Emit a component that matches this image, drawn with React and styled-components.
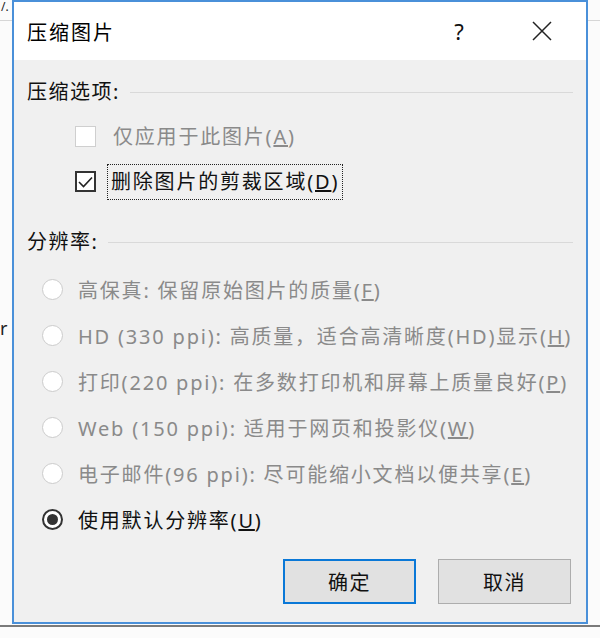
import React from 'react';
import styled, { createGlobalStyle } from 'styled-components';

const GlobalStyle = createGlobalStyle`
	html, body {
		margin: 0;
		padding: 0;
		background: #fafafa;
	}
	* {
		box-sizing: border-box;
	}
`;

const FONT = `"Noto Sans", "Noto Sans CJK SC", sans-serif`;

const Desktop = styled.div`
	position: relative;
	width: 600px;
	height: 638px;
	overflow: hidden;
	background: #fbfbfb;
	font-family: ${FONT};
	padding-left: 12px;
`;

// bits of the window behind the dialog
const BackLine = styled.div`
	position: absolute;
	left: 0;
	right: 0;
	top: ${(p) => p.top}px;
	height: ${(p) => p.h || 1}px;
	background: ${(p) => p.color || '#d6d6d6'};
`;

const BackText = styled.div`
	position: absolute;
	left: ${(p) => p.left}px;
	top: ${(p) => p.top}px;
	font-size: ${(p) => p.size || 18}px;
	color: #222;
	line-height: 1.2;
`;

const Dialog = styled.div`
	position: relative;
	z-index: 1;
	width: 576px;
	height: 624px;
	border: 2px solid #4a90d9;
	display: flex;
	flex-direction: column;
	background: #f0f0f0;
`;

const TitleBar = styled.div`
	height: 58px;
	background: #fff;
	display: flex;
	align-items: center;
	padding-left: 13px;
	padding-right: 20px;
	font-size: 20px;
	letter-spacing: 2px;
	color: #000;
`;

const Title = styled.div`
	flex: 1;
`;

const TitleButton = styled.div`
	width: ${(p) => p.w}px;
	height: 40px;
	margin-left: ${(p) => p.ml || 0}px;
	display: flex;
	align-items: center;
	justify-content: center;
	font-size: 22px;
	color: #111;
`;

const Body = styled.div`
	flex: 1;
	padding: 15px 13px 18px 13px;
	display: flex;
	flex-direction: column;
`;

const SectionHeader = styled.div`
	height: 30px;
	display: flex;
	align-items: center;
	font-size: 20px;
	letter-spacing: 1.5px;
	color: #111;
	margin-top: ${(p) => p.mt || 0}px;
	&::after {
		content: '';
		flex: 1;
		height: 1px;
		margin: 4px 0 0 ${(p) => p.lineGap}px;
		background: #d9d9d9;
	}
`;

const List = styled.div`
	display: flex;
	flex-direction: column;
	margin-top: ${(p) => p.mt}px;
	padding-left: ${(p) => p.indent}px;
`;

const Row = styled.div`
	height: ${(p) => p.h}px;
	display: flex;
	align-items: center;
	font-size: 20px;
	letter-spacing: 1.8px;
	color: ${(p) => (p.disabled ? '#8a8a8a' : '#111')};
	white-space: nowrap;
`;

const Box = styled.div`
	width: 21px;
	height: 21px;
	flex: none;
	background: #fff;
	border: ${(p) => (p.disabled ? '1.5px solid #cfcfcf' : '2px solid #333')};
	display: flex;
	align-items: center;
	justify-content: center;
	margin-right: ${(p) => (p.focused ? 11 : 13)}px;
`;

const Focus = styled.div`
	border: ${(p) => (p.on ? '1px dotted #222' : '1px solid transparent')};
	padding: 6px 3px 6px 3px;
	line-height: 22px;
`;

const Radio = styled.div`
	width: 21px;
	height: 21px;
	flex: none;
	border-radius: 50%;
	background: #fff;
	border: ${(p) => (p.checked ? '2px solid #333' : '1.5px solid #cccccc')};
	display: flex;
	align-items: center;
	justify-content: center;
	margin-right: 15px;
	&::after {
		content: '';
		display: ${(p) => (p.checked ? 'block' : 'none')};
		width: 11px;
		height: 11px;
		border-radius: 50%;
		background: #333;
	}
`;

const Buttons = styled.div`
	margin-top: 17px;
	display: flex;
	justify-content: flex-end;
	gap: 22px;
	padding-right: 2px;
`;

const Button = styled.div`
	width: 133px;
	height: 45px;
	display: flex;
	align-items: center;
	justify-content: center;
	background: #e1e1e1;
	border: ${(p) => (p.primary ? '2px solid #0a78d7' : '1px solid #adadad')};
	font-size: 20px;
	letter-spacing: 1.5px;
	color: #111;
`;

const Check = () => (
	<svg width="15" height="12" viewBox="0 0 15 12">
		<path d="M1 6 L5.5 10.5 L14 1.5" fill="none" stroke="#222" strokeWidth="1.6" />
	</svg>
);

const Close = () => (
	<svg width="20" height="20" viewBox="0 0 20 20">
		<path d="M1 1 L19 19 M19 1 L1 19" stroke="#222" strokeWidth="1.5" />
	</svg>
);

const radios = [
	{ text: '高保真: 保留原始图片的质量', key: 'F' },
	{ text: 'HD (330 ppi): 高质量，适合高清晰度(HD)显示', key: 'H' },
	{ text: '打印(220 ppi): 在多数打印机和屏幕上质量良好', key: 'P' },
	{ text: 'Web (150 ppi): 适用于网页和投影仪', key: 'W' },
	{ text: '电子邮件(96 ppi): 尽可能缩小文档以便共享', key: 'E' },
	{ text: '使用默认分辨率', key: 'U', checked: true },
];

export default () => (
	<Desktop>
		<GlobalStyle />
		<BackLine top={20} />
		<BackLine top={625} h={2} color="#7a7a7a" />
		<BackText left={1} top={0} size={12}>/.</BackText>
		<BackText left={0} top={318}>r</BackText>
		<Dialog>
			<TitleBar>
				<Title>压缩图片</Title>
				<TitleButton w={40}>?</TitleButton>
				<TitleButton w={48} ml={38}><Close /></TitleButton>
			</TitleBar>
			<Body>
				<SectionHeader lineGap={10}>压缩选项:</SectionHeader>
				<List mt={9} indent={48}>
					<Row h={45} disabled>
						<Box disabled />
						<Focus>仅应用于此图片(<u>A</u>)</Focus>
					</Row>
					<Row h={45}>
						<Box focused><Check /></Box>
						<Focus on>删除图片的剪裁区域(<u>D</u>)</Focus>
					</Row>
				</List>
				<SectionHeader mt={21} lineGap={10}>分辨率:</SectionHeader>
				<List mt={11} indent={15}>
					{radios.map((r) => (
						<Row h={46} key={r.key} disabled={!r.checked}>
							<Radio checked={r.checked} />
							<span>{r.text}(<u>{r.key}</u>)</span>
						</Row>
					))}
				</List>
				<Buttons>
					<Button primary>确定</Button>
					<Button>取消</Button>
				</Buttons>
			</Body>
		</Dialog>
	</Desktop>
);
